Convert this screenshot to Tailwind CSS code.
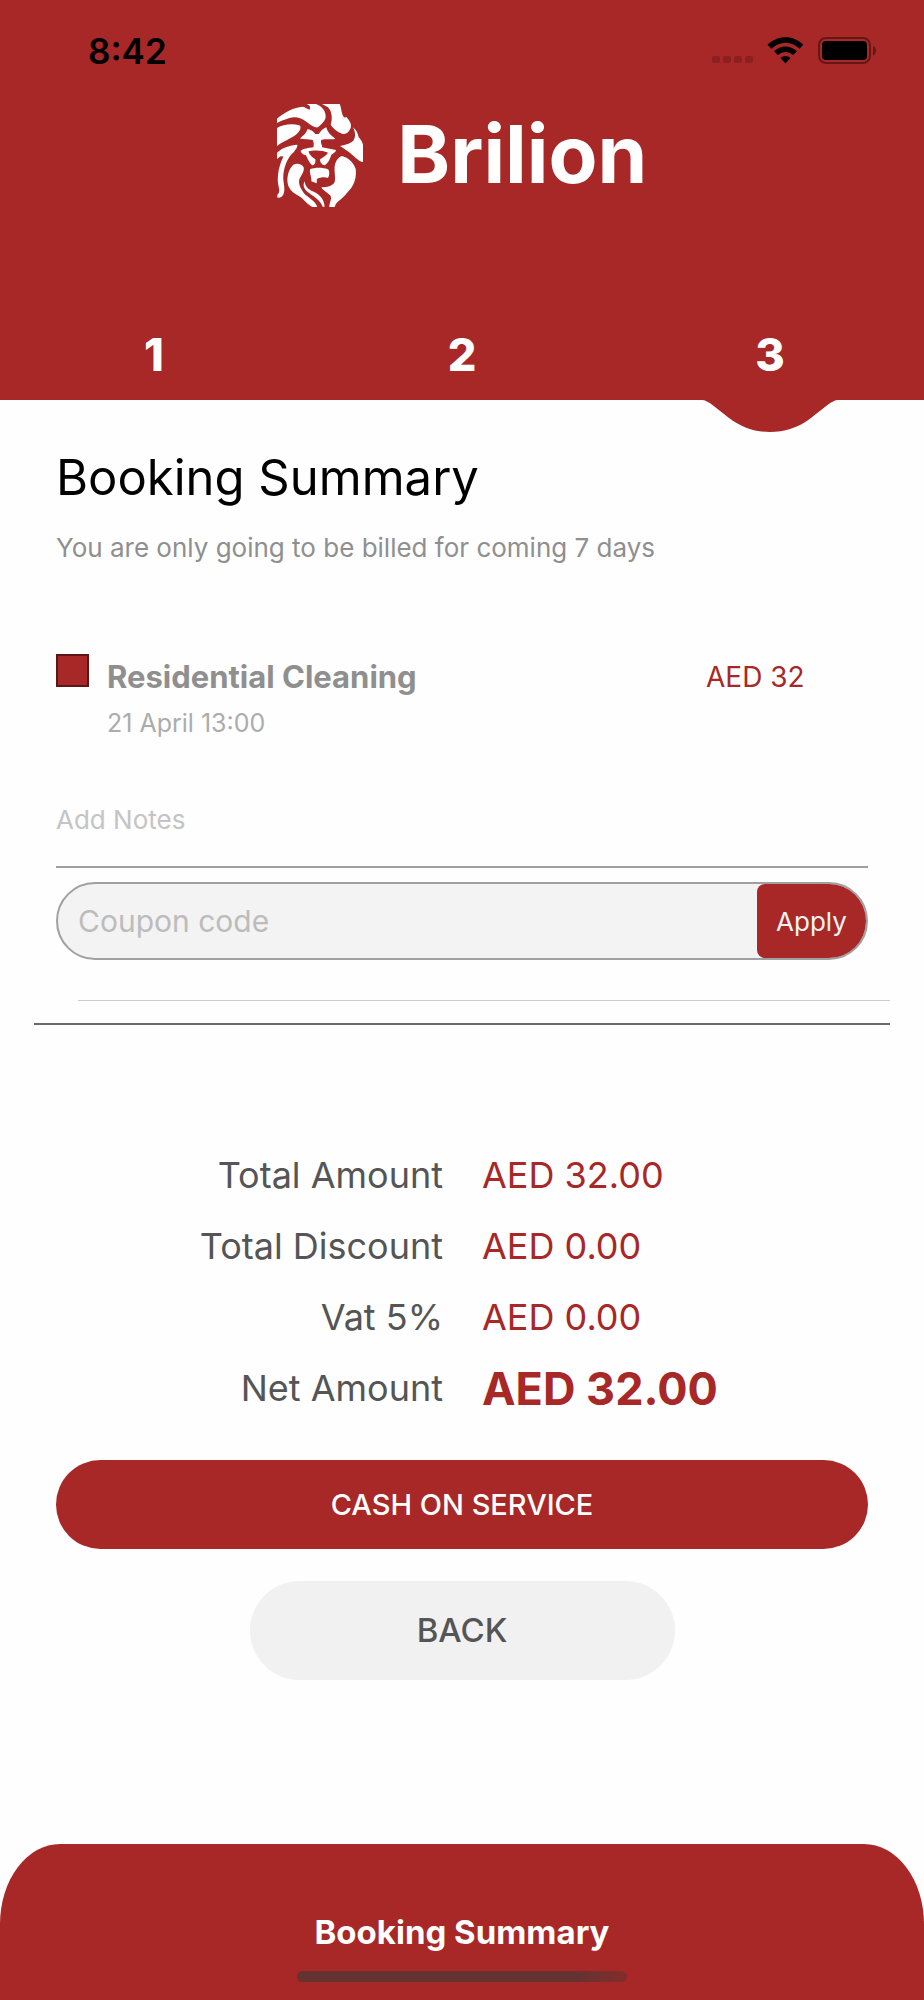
<!DOCTYPE html>
<html lang="en">
<head>
    <meta charset="UTF-8">
    <title>Booking Summary - Brilion</title>
    <meta name="viewport" content="width=device-width, initial-scale=1.0">
    <script src="https://cdn.jsdelivr.net/npm/@tailwindcss/browser@4"></script>
</head>
<body class="min-h-screen flex flex-col bg-[#fefefe] font-['Inter','Liberation_Sans',sans-serif]">
    <header class="bg-[#a82727]">
        <!-- Status bar -->
        <div class="flex items-center justify-between h-[102px] pl-[88px] pr-[46px]">
            <span class="text-[35px] leading-10 font-semibold text-black">8:42</span>
            <svg class="w-[166px] h-[30px]" viewBox="0 0 166 30" aria-hidden="true">
                <g fill="#8c2020">
                    <rect x="0" y="20" width="8" height="7" rx="2"/>
                    <rect x="11" y="20" width="8" height="7" rx="2"/>
                    <rect x="22" y="20" width="8" height="7" rx="2"/>
                    <rect x="33" y="20" width="8" height="7" rx="2"/>
                </g>
                <path d="M55.500 8.800C65.500 -1.200 81.500 -1.200 91.300 8.800L87.500 12.700C79.500 4.700 67.500 4.700 59.500 12.700ZM62 15.200C68.500 8.800 78.500 8.800 85 15.200L81 19C76.500 15 70.500 15 66 19ZM68.500 22C71.500 19.300 75.500 19.300 78.500 22L73.500 27.500Z" fill="#000"/>
                <rect x="107" y="2" width="51" height="25" rx="7" fill="none" stroke="#651717" stroke-width="2"/>
                <rect x="110" y="5" width="45" height="19" rx="4" fill="#000"/>
                <path d="M161 10c4 1.500 4 8 0 9.500z" fill="#651717"/>
            </svg>
        </div>

        <!-- Logo -->
        <svg class="block mx-auto mt-0.5 w-[370px] h-[103px]" viewBox="15 12 1110 309" role="img" aria-label="Brilion">
            <g fill="#fff">
                <path d="M15 56C38 36 66 22 92 20C100 22 106 26 112 29C118 22 112 15 104 12H132C150 18 162 34 161 50C160 64 148 72 138 82C128 84 116 76 104 66C88 54 70 48 50 55C36 60 24 64 15 69Z"/>
                <path d="M150 12H203C208 22 207 34 212 45C216 54 220 54 222 50C232 60 240 72 236 84C232 96 222 104 210 101C194 95 182 84 176 74C182 56 180 34 168 22Z"/>
                <path d="M15 84C34 72 62 70 82 76C88 80 86 88 80 96C64 116 40 118 15 138Z"/>
                <path d="M243 82C254 90 258 102 260 112C266 118 270 124 273 134V186C262 186 252 174 242 166C230 154 216 146 204 138C222 134 236 130 244 122C252 110 250 96 243 82Z"/>
                <path d="M15 158C32 142 54 136 76 134C78 142 66 156 56 166C42 184 36 206 34 226C32 244 40 262 36 278C34 288 26 294 16 293V284C26 278 20 264 18 250C16 226 20 198 34 170C26 166 20 172 15 178Z"/>
                <path d="M106 88C114 88 124 94 130 102H140C146 94 152 86 163 82C166 96 176 106 190 116C178 120 160 116 148 120C144 128 152 136 150 142L192 150C192 156 184 160 178 164C174 178 168 190 158 196C148 194 144 186 144 178C152 172 162 168 168 158C152 150 124 150 110 154C112 166 122 172 130 178C132 190 126 196 120 196C110 186 106 174 102 166C94 164 86 158 86 152C94 146 110 144 124 142C126 136 126 126 122 120C110 116 96 118 84 116C90 108 102 104 106 88Z"/>
                <path d="M114 208C130 202 150 202 168 208C174 214 172 228 168 234C158 230 146 232 136 236C132 240 136 244 134 250L118 244C120 236 112 220 114 208Z"/>
                <path d="M64 194C76 188 90 192 95 202C98 214 88 226 82 238C78 254 88 268 96 280C108 294 128 300 136 321H122C104 312 96 298 84 290C68 282 50 270 47 250C44 230 50 206 64 194Z"/>
                <path d="M98 244C100 258 106 266 118 272C138 280 156 292 158 320H152C144 300 128 292 112 280C98 270 90 258 98 244Z"/>
                <path d="M210 168C226 172 244 186 251 206C254 230 248 250 236 266C224 280 214 292 204 300C198 304 190 312 188 321H172C172 308 180 298 176 288C168 278 154 274 148 262C164 262 182 258 188 246C192 230 184 208 190 190C194 178 202 170 210 168Z"/>
                <text x="376" y="249" font-family="Inter, sans-serif" font-size="240" font-weight="700">Brilion</text>
            </g>
        </svg>

        <!-- Steps -->
        <ol class="grid grid-cols-3 mt-[103px] h-[90px] text-center text-[45px] leading-[90px] font-extrabold text-white">
            <li>1</li>
            <li>2</li>
            <li class="relative" aria-current="step">3
                <svg class="absolute top-full left-1/2 -translate-x-1/2 w-[136px] h-8" viewBox="0 0 136 32" aria-hidden="true">
                    <path d="M0 0C6 0 14 8 27 18C40 28 54 32 68 32C82 32 96 28 109 18C122 8 130 0 136 0Z" fill="#a82727"/>
                </svg>
            </li>
        </ol>
    </header>

    <main class="px-14 pt-12">
        <h1 class="text-[49px] leading-[60px] text-black">Booking Summary</h1>
        <p class="mt-5 text-[26px] leading-10 text-[#8f8f8f]">You are only going to be billed for coming 7 days</p>

        <div class="flex mt-[86px]">
            <span class="size-[33px] shrink-0 bg-[#a82727] border-2 border-[#5c1616]"></span>
            <div class="flex-1 ml-[18px]">
                <h2 class="text-[31px] leading-[46px] font-bold text-[#8f8f8f]">Residential Cleaning</h2>
                <p class="mt-1 text-[25px] leading-[38px] text-[#acacac]">21 April 13:00</p>
            </div>
            <span class="w-[162px] text-[28px] leading-[46px] text-[#a82727]">AED 32</span>
        </div>

        <form id="couponForm">
            <input type="text" name="notes" aria-label="Add Notes" placeholder="Add Notes"
                class="block w-full h-24 mt-[30px] border-b-2 border-[#a0a0a0] text-[26px] placeholder:text-[#c4c4c4] focus:outline-none">
            <div class="flex h-[78px] mt-[14px] rounded-full border-2 border-[#a0a0a0] bg-[#f3f3f3] overflow-hidden">
                <input type="text" name="coupon" aria-label="Coupon code" placeholder="Coupon code"
                    class="flex-1 min-w-0 pl-5 text-[30px] placeholder:text-[#bcbcbc] focus:outline-none">
                <button type="submit" class="w-[109px] rounded-l-lg bg-[#a82727] text-[26px] text-[#f3f3f3]">Apply</button>
            </div>
        </form>

        <hr class="mt-10 ml-[22px] -mr-[22px] border-[#cccccc]">
        <hr class="mt-[22px] -mx-[22px] border-t-2 border-[#6a6a6a]">

        <dl class="grid grid-cols-[387px_1fr] gap-x-[39px] mt-[115px] text-[36px] leading-[71px]">
            <dt class="text-right text-[#555555]">Total Amount</dt>
            <dd class="text-[#a82727]">AED 32.00</dd>
            <dt class="text-right text-[#555555]">Total Discount</dt>
            <dd class="text-[#a82727]">AED 0.00</dd>
            <dt class="text-right text-[#555555]">Vat 5%</dt>
            <dd class="text-[#a82727]">AED 0.00</dd>
            <dt class="text-right text-[#555555]">Net Amount</dt>
            <dd class="text-[45px] font-bold text-[#a82727]">AED 32.00</dd>
        </dl>

        <button type="button" class="block w-full h-[89px] mt-9 rounded-full bg-[#a82727] text-[29px] font-medium text-white">CASH ON SERVICE</button>
        <button type="button" class="block w-[425px] h-[99px] mt-8 mx-auto rounded-full bg-[#f1f1f1] text-[33px] font-medium text-[#555555]">BACK</button>
    </main>

    <footer class="flex flex-col items-center mt-auto h-[156px] pt-[68px] rounded-t-[60px_80px] bg-[#a82727]">
        <p class="text-[33px] leading-10 font-bold text-white">Booking Summary</p>
        <div class="w-[330px] h-[11px] mt-[19px] rounded-full bg-linear-to-r from-[#653232] from-85% to-[#842c2c]"></div>
    </footer>
</body>
</html>
